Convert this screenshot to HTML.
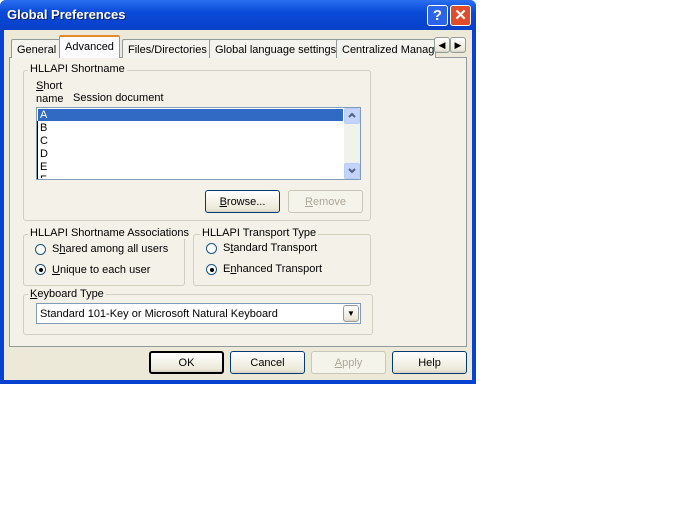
<!DOCTYPE html>
<html><head><style>
*{box-sizing:border-box;margin:0;padding:0}
body{width:700px;height:525px;background:#fff;position:relative;font-family:"Liberation Sans",sans-serif;font-size:11px;color:#000;overflow:hidden}
.a{position:absolute}
#win{left:0;top:0;width:476px;height:384px;background:#0842d0;border-radius:6px 6px 0 0}
#title{left:0;top:0;width:476px;height:30px;background:linear-gradient(#2a6ff0,#0a4ad8 40%,#0840c8);border-radius:6px 6px 0 0}
#tt{left:7px;top:7px;color:#fff;font-weight:bold;font-size:13px;text-shadow:1px 1px #0a1e70}
.tb{top:5px;width:21px;height:21px;border:1px solid #fff;border-radius:3px;color:#fff;font-weight:bold;text-align:center;font-size:15px;line-height:19px}
#client{left:4px;top:30px;width:468px;height:350px;background:#ece9d8}
.tab{top:37px;height:21px;border:1px solid #919b9c;border-bottom:none;background:#f4f3ee;padding:4px 5px 0;white-space:nowrap;border-radius:2px 2px 0 0}
#panel{left:9px;top:57px;width:458px;height:290px;border:1px solid #919b9c;background:#f3f1e8}
.grp{border:1px solid #d0d0bf;border-radius:3px}
.lg{background:#f3f1e8;padding:0 2px;white-space:nowrap}
.btn{border:1px solid #003c74;border-radius:3px;background:linear-gradient(#fff,#ece9d8 85%,#d6d0c5);text-align:center;line-height:23px;height:23px}
.dis{border-color:#c9c7ba;color:#aca899;background:#f5f4ea}
.rad{width:11px;height:11px;border:1px solid #1c5180;border-radius:50%;background:#fff}
.dot{left:3px;top:3px;width:4px;height:4px;background:#000;border-radius:50%}
u{text-decoration:underline}
</style></head><body>
<div id="win" class="a"></div>
<div id="title" class="a"></div>
<div id="tt" class="a">Global Preferences</div>
<div class="a tb" style="left:427px;background:#2c64e8">?</div>
<div class="a tb" style="left:450px;background:#e04c2c">✕</div>
<div id="client" class="a"></div>
<div id="panel" class="a"></div>
<div class="a tab" style="left:11px;top:39px;height:19px">General</div>
<div class="a tab" style="left:59px;top:35px;height:23px;background:#fcfcfe;border-top:2px solid #e68b2c;z-index:2">Advanced</div>
<div class="a tab" style="left:122px;top:39px;height:19px">Files/Directories</div>
<div class="a tab" style="left:209px;top:39px;height:19px">Global language settings</div>
<div class="a tab" style="left:336px;top:39px;height:19px;width:100px;overflow:hidden">Centralized Manage</div>
<div class="a btn" style="left:434px;top:37px;width:16px;height:16px;line-height:14px;border-color:#919b9c;font-size:9px">◀</div>
<div class="a btn" style="left:450px;top:37px;width:16px;height:16px;line-height:14px;border-color:#919b9c;font-size:9px">▶</div>

<div class="a grp" style="left:23px;top:70px;width:348px;height:151px"></div>
<div class="a lg" style="left:28px;top:63px">HLLAPI Shortname</div>
<div class="a" style="left:36px;top:80px;line-height:13px"><u>S</u>hort<br>name</div>
<div class="a" style="left:73px;top:92px">Session document</div>
<div class="a" style="left:36px;top:107px;width:325px;height:73px;border:1px solid #7f9db9;background:#fff"></div>
<div class="a" style="left:38px;top:109px;width:305px;height:12px;background:#316ac5"></div>
<div class="a" style="left:40px;top:109px;line-height:13px;width:10px;height:69px;overflow:hidden"><span style="color:#fff">A</span><br>B<br>C<br>D<br>E<br>F</div>
<div class="a" style="left:37px;top:121px;width:1px;height:58px;background:#000"></div>
<div class="a" style="left:344px;top:108px;width:16px;height:71px;background:#f2f2ec"></div>
<div class="a" style="left:344px;top:108px;width:16px;height:16px;border:1px solid #b9cdf5;border-radius:2px;background:#c4d3fb"><svg width="14" height="14" style="position:absolute;left:0;top:0"><path d="M4 8 L7 5 L10 8" stroke="#4d6185" stroke-width="2" fill="none"/></svg></div>
<div class="a" style="left:344px;top:163px;width:16px;height:16px;border:1px solid #b9cdf5;border-radius:2px;background:#c4d3fb"><svg width="14" height="14" style="position:absolute;left:0;top:0"><path d="M4 5 L7 8 L10 5" stroke="#4d6185" stroke-width="2" fill="none"/></svg></div>
<div class="a btn" style="left:205px;top:190px;width:75px"><u>B</u>rowse...</div>
<div class="a btn dis" style="left:288px;top:190px;width:75px"><u>R</u>emove</div>

<div class="a grp" style="left:23px;top:234px;width:162px;height:52px"></div>
<div class="a lg" style="left:28px;top:227px">HLLAPI Shortname Associations</div>
<div class="a rad" style="left:35px;top:244px"></div>
<div class="a" style="left:52px;top:243px">S<u>h</u>ared among all users</div>
<div class="a rad" style="left:35px;top:264px"><div class="a dot"></div></div>
<div class="a" style="left:52px;top:264px"><u>U</u>nique to each user</div>

<div class="a grp" style="left:193px;top:234px;width:178px;height:52px"></div>
<div class="a lg" style="left:200px;top:227px">HLLAPI Transport Type</div>
<div class="a rad" style="left:206px;top:243px"></div>
<div class="a" style="left:223px;top:242px">S<u>t</u>andard Transport</div>
<div class="a rad" style="left:206px;top:264px"><div class="a dot"></div></div>
<div class="a" style="left:223px;top:263px">E<u>n</u>hanced Transport</div>

<div class="a grp" style="left:23px;top:294px;width:350px;height:41px"></div>
<div class="a lg" style="left:28px;top:288px"><u>K</u>eyboard Type</div>
<div class="a" style="left:36px;top:303px;width:325px;height:21px;border:1px solid #7f9db9;background:#fff;padding:4px 3px">Standard 101-Key or Microsoft Natural Keyboard</div>
<div class="a btn" style="left:343px;top:305px;width:16px;height:17px;line-height:15px;border-color:#999;font-size:8px">▼</div>

<div class="a btn" style="left:149px;top:351px;width:75px;border:2px solid #000;line-height:21px">OK</div>
<div class="a btn" style="left:230px;top:351px;width:75px">Cancel</div>
<div class="a btn dis" style="left:311px;top:351px;width:75px"><u>A</u>pply</div>
<div class="a btn" style="left:392px;top:351px;width:75px">Help</div>
</body></html>
